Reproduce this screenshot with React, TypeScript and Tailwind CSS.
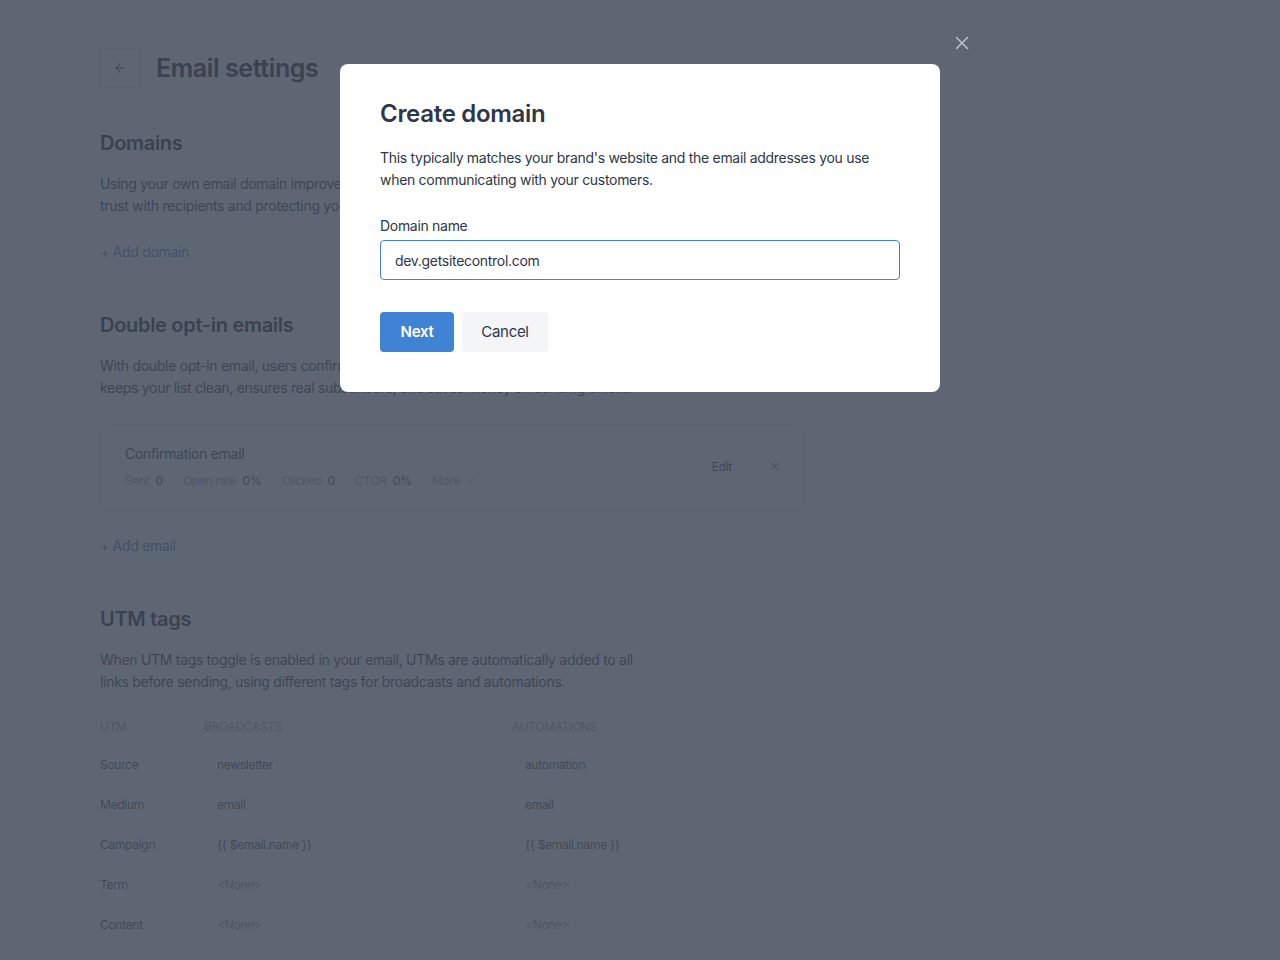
import { ArrowLeft, ChevronDown, X } from 'lucide-react'

const utmRows = [
  { name: 'Source', broadcast: 'newsletter', automation: 'automation', empty: false },
  { name: 'Medium', broadcast: 'email', automation: 'email', empty: false },
  { name: 'Campaign', broadcast: '{{ $email.name }}', automation: '{{ $email.name }}', empty: false },
  { name: 'Term', broadcast: '<None>', automation: '<None>', empty: true },
  { name: 'Content', broadcast: '<None>', automation: '<None>', empty: true },
]

const stats = [
  { label: 'Sent', value: '0' },
  { label: 'Open rate', value: '0%' },
  { label: 'Clicked', value: '0' },
  { label: 'CTOR', value: '0%' },
]

function SettingsPage() {
  return (
    <div className="pl-[100px] pt-12 pb-10 w-[804px]">
      {/* Header */}
      <div className="flex items-center gap-4">
        <button className="w-10 h-10 flex items-center justify-center rounded border border-[#e5e7eb] text-[#374151]">
          <ArrowLeft size={14} strokeWidth={1.75} />
        </button>
        <h1 className="text-[25px] font-semibold text-[#1f2937] tracking-[-0.4px] pt-[2px]">Email settings</h1>
      </div>

      {/* Domains */}
      <section className="mt-[41px]">
        <h2 className="text-[20px] font-semibold text-[#1f2937] leading-7 tracking-[-0.3px]">Domains</h2>
        <p className="mt-4 text-[14px] leading-[22px] text-[#374151] whitespace-nowrap">
          Using your own email domain improves deliverability, building
          <br />
          trust with recipients and protecting your sender reputation.
        </p>
        <a className="block mt-[24px] text-[14px] text-[#3f83d4]">+ Add domain</a>
      </section>

      {/* Double opt-in */}
      <section className="mt-[49px]">
        <h2 className="text-[20px] font-semibold text-[#1f2937] leading-7 tracking-[-0.3px]">Double opt-in emails</h2>
        <p className="mt-4 text-[14px] leading-[22px] text-[#374151] whitespace-nowrap">
          With double opt-in email, users confirm their subscription by clicking a link. It
          <br />
          keeps your list clean, ensures real subscribers, and saves money on sending emails.
        </p>
        <div className="mt-[25px] border border-[#e5e7eb] rounded-md px-6 pt-[18px] pb-[20px] flex items-center">
          <div className="flex-1">
            <div className="text-[14px] text-[#374151]">Confirmation email</div>
            <div className="mt-[8px] flex items-center gap-5 text-[12px] text-[#9ca3af]">
              {stats.map((s) => (
                <span key={s.label}>
                  {s.label}
                  <span className="ml-[6px] font-medium text-[#6b7280]">{s.value}</span>
                </span>
              ))}
              <span className="flex items-center gap-1">
                More <ChevronDown size={12} />
              </span>
            </div>
          </div>
          <span className="text-[12px] text-[#374151] mr-[36px]">Edit</span>
          <X size={13} className="text-[#9ca3af] mr-[-2px]" />
        </div>
        <a className="block mt-[24px] text-[14px] text-[#3f83d4]">+ Add email</a>
      </section>

      {/* UTM tags */}
      <section className="mt-[49px]">
        <h2 className="text-[20px] font-semibold text-[#1f2937] leading-7 tracking-[-0.3px]">UTM tags</h2>
        <p className="mt-4 text-[14px] leading-[22px] text-[#374151] whitespace-nowrap">
          When UTM tags toggle is enabled in your email, UTMs are automatically added to all
          <br />
          links before sending, using different tags for broadcasts and automations.
        </p>
        <div className="mt-4 grid grid-cols-[104px_308px_1fr] text-[12px]">
          <div className="h-9 flex items-center text-[#9ca3af] uppercase">UTM</div>
          <div className="h-9 flex items-center text-[#9ca3af] uppercase">Broadcasts</div>
          <div className="h-9 flex items-center text-[#9ca3af] uppercase">Automations</div>
          {utmRows.map((r) => (
            <div key={r.name} className="contents">
              <div className="h-10 flex items-center text-[#4b5563]">{r.name}</div>
              <div className={`h-10 flex items-center pl-[13px] ${r.empty ? 'text-[#9ca3af]' : 'text-[#4b5563]'}`}>
                {r.broadcast}
              </div>
              <div className={`h-10 flex items-center pl-[13px] ${r.empty ? 'text-[#9ca3af]' : 'text-[#4b5563]'}`}>
                {r.automation}
              </div>
            </div>
          ))}
        </div>
      </section>
    </div>
  )
}

function CreateDomainModal() {
  return (
    <div className="fixed inset-0 bg-[rgba(63,71,87,0.83)]">
      <button className="absolute left-[951px] top-[32px] text-[#c3c7ce]">
        <X size={22} strokeWidth={1.5} />
      </button>
      <div className="absolute left-[340px] top-[64px] w-[600px] bg-white rounded-lg px-10 pt-[34px] pb-10">
        <h3 className="text-[24px] font-semibold text-[#2d3748] leading-8 tracking-[-0.3px]">Create domain</h3>
        <p className="mt-[17px] text-[14px] leading-[22px] text-[#2d3748]">
          This typically matches your brand's website and the email addresses you use
          <br />
          when communicating with your customers.
        </p>
        <label className="block mt-[25px] text-[14px] text-[#2d3748] leading-[20px]">Domain name</label>
        <input
          className="mt-[4px] w-full h-10 px-[14px] rounded border border-[#3f83d4] text-[14px] text-[#2d3748] outline-none"
          defaultValue="dev.getsitecontrol.com"
        />
        <div className="mt-8 flex items-center gap-2">
          <button className="h-10 w-[74px] rounded bg-[#3f83d4] text-white text-[15px] font-semibold">Next</button>
          <button className="h-10 w-[86px] rounded bg-[#f4f5f7] text-[#2d3748] text-[15px]">Cancel</button>
        </div>
      </div>
    </div>
  )
}

export default function App() {
  return (
    <div className="min-h-[960px] bg-white font-['Inter',sans-serif] tracking-[-0.3px]">
      <SettingsPage />
      <CreateDomainModal />
    </div>
  )
}
